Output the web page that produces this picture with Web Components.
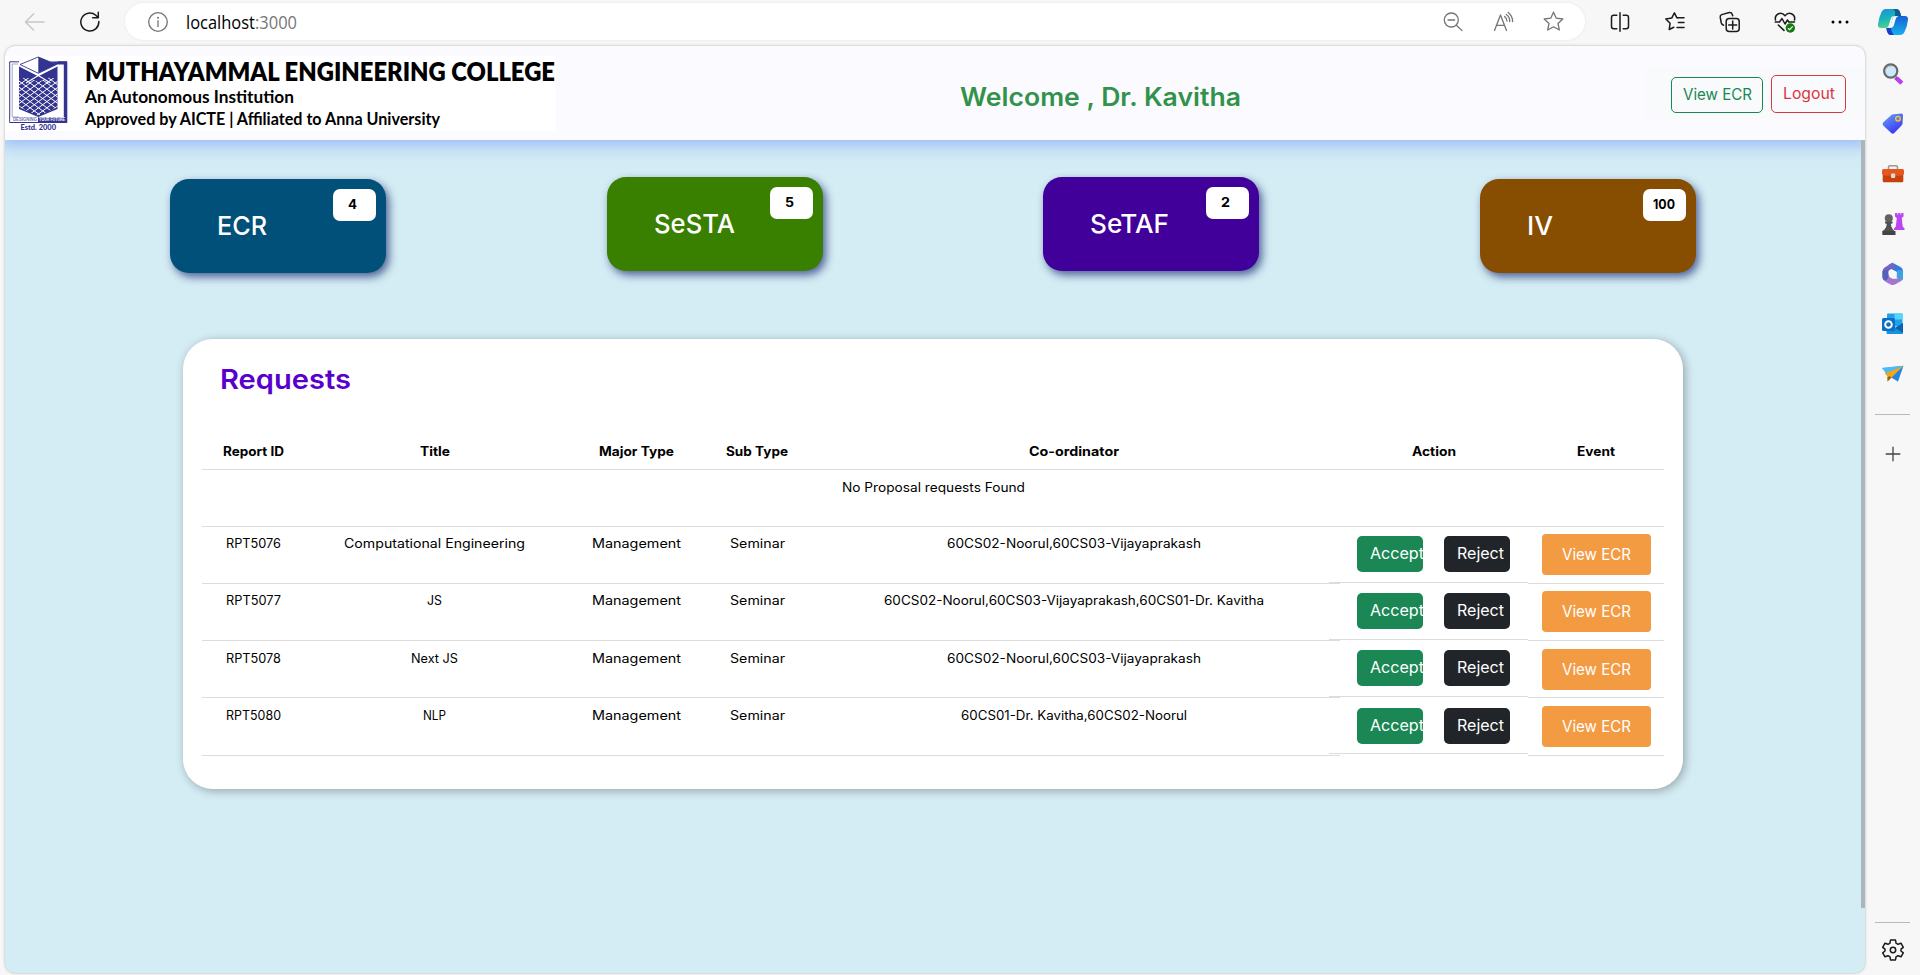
<!DOCTYPE html>
<html lang="en">
<head>
<meta charset="utf-8">
<title>localhost:3000</title>
<style>
html,body{margin:0;height:100%;overflow:hidden}
body{background:#f7f7f7;font-family:Inter,"Open Sans",sans-serif;color:#000}
</style>
</head>
<body>
<app-window></app-window>
<script>
const shadow=(el,html)=>{const r=el.attachShadow({mode:'open'});const t=document.createElement('template');t.innerHTML=html;r.append(t.content.cloneNode(true));return r};

const S='fill="none" stroke="#1b1b1b" stroke-width="1.5" stroke-linecap="round" stroke-linejoin="round"';
const G='fill="none" stroke="#747474" stroke-width="1.3" stroke-linecap="round" stroke-linejoin="round"';
const STAR='M10.500 1.200L13.300 7.200L19.800 8L15 12.500L16.300 19L10.500 15.800L4.700 19L6 12.500L1.200 8L7.700 7.200Z';
const ICONS={
back:[22,22,`<path d="M10 2.500L1.500 11L10 19.500M1.800 11H20.500" fill="none" stroke="#c6c6c6" stroke-width="1.4"/>`],
reload:[22,22,`<path d="M19.800 10.500A9 9 0 1 1 16.800 4.300L19 6.500M19.300 1.200V6.700H13.700" ${S}/>`],
info:[22,22,`<circle cx="11" cy="11" r="9.300" ${G}/><path d="M11 9.700V15.500" ${G}/><circle cx="11" cy="6.800" r="1" fill="#747474"/>`],
zoomout:[22,22,`<circle cx="9.300" cy="9" r="7" ${G}/><path d="M14.400 14.200L20 19.600M6 9H12.600" ${G}/>`],
read:[24,22,`<path d="M2.500 19.500L8.500 4L14.500 19.500M4.800 14.300H12.300" ${G}/><path d="M12.600 5.500Q15 7.500 15 10M14.300 3.500Q18 6 17.700 10.500M16.200 1.500Q20.600 4.800 20.600 10.500" ${G}/>`],
star:[22,22,`<path d="${STAR}" ${G}/>`],
split:[22,22,`<path d="M7.800 4.200H4.700Q2.500 4.200 2.500 6.400V15.500Q2.500 17.700 4.700 17.700H7.800M14.200 4.200H17.300Q19.500 4.200 19.500 6.400V15.500Q19.500 17.700 17.300 17.700H14.200M11 1.800V20.200" ${S}/>`],
favs:[22,22,`<path d="M13.800 6.900L12.800 6.700L10.400 1.800L7.700 7.100L1.800 8L6.100 12.300L5.200 18.500L9.800 16.300M13.200 6.700H20M14.300 11.600H20M13 16.500H20" ${S}/>`],
coll:[22,22,`<path d="M4.600 14.200Q2.800 13.800 2.300 12L1.200 6.200Q.9 4.300 2.700 3.600L10.300 1.500Q12.500 1.200 13.200 3.300L13.700 4.800" ${S}/><rect x="7.200" y="7.500" width="13" height="13" rx="3" ${S}/><path d="M13.700 10V18M9.700 14H17.700" ${S}/>`],
heart:[22,22,`<path d="M1.500 9Q.5 4.500 4.500 2.700Q8.300 1.300 11 4.800Q13.700 1.300 17.500 2.700Q21.500 4.500 20.500 9M1.200 11H5.500L8 7.500L11 13L13.500 9L14.800 11H20.500M4.300 14L10 19.400" ${S}/><circle cx="16.300" cy="17" r="4.700" fill="#107c10"/><path d="M14 17.200L15.700 18.700L18.700 15.400" fill="none" stroke="#fff" stroke-width="1.2"/>`],
dots:[22,22,`<circle cx="4" cy="11" r="1.500"/><circle cx="11" cy="11" r="1.500"/><circle cx="18" cy="11" r="1.500"/>`],
copilot:[32,28,`<defs><linearGradient id="a" x1="0" y1="0" x2=".3" y2="1"><stop offset="0" stop-color="#1a8fdc"/><stop offset=".55" stop-color="#19b5b8"/><stop offset="1" stop-color="#55d08a"/></linearGradient><linearGradient id="b" x1="0" y1="0" x2="0" y2="1"><stop offset="0" stop-color="#1661cf"/><stop offset="1" stop-color="#16b0ee"/></linearGradient></defs><path d="M8.500 1H19Q22 1 23 4L24.200 8H17Q14.500 8 13.800 10.500L11.800 17.500Q10.800 20 8.500 20H4Q.8 20 1 16.500Q1.600 10 4.500 4Q5.800 1 8.500 1Z" fill="url(#a)"/><path d="M16 1H19Q22 1 23 4L24.200 8H17.800Q19 3 16 1Z" fill="#0d5c8f"/><path d="M18.500 8H28Q31.200 8 31 11.500Q30.500 18 27.500 24Q26.200 27 23.500 27H14Q10.500 27 9.300 20Q12.500 20.500 13.500 18L15.600 10.500Q16.300 8 18.500 8Z" fill="url(#b)"/><path d="M9.300 20Q12.500 20.500 13.700 18.500Q14 24 17 27H13Q10.200 26.500 9.300 20Z" fill="#1b3fc4"/><path d="M18.500 8H21.500Q19.500 8.500 18.700 11L16.700 17.700Q15.800 20 13 20H10.500Q12.800 19.500 13.500 17.300L15.600 10.500Q16.300 8 18.500 8Z" fill="#f4fbff"/>`],
search:[24,24,`<path d="M14.500 15.500L20.500 21" stroke="#8d4bd8" stroke-width="3.800"/><path d="M16 16.500L21 21" stroke="#c03bf5" stroke-width="3.800"/><circle cx="9.700" cy="9" r="6.600" fill="#cde8fb" stroke="#686868" stroke-width="2.200"/><path d="M5 6.500A5.500 5.500 0 0 1 11 3.900" fill="none" stroke="#a5a5a5" stroke-width="1"/>`],
tag:[24,24,`<defs><linearGradient id="c" x1="0" y1="0" x2=".6" y2="1"><stop offset="0" stop-color="#67a5fa"/><stop offset="1" stop-color="#3b38f2"/></linearGradient></defs><path d="M12.500 2.200L20.500 1.500Q22 1.700 22 3.300L21.500 11.800Q21.300 12.800 20.500 13.600L13.300 21Q11.700 22.300 10.200 21L2.200 13.500Q.8 12 2.200 10.500L10.300 3Q11.200 2.300 12.500 2.200Z" fill="url(#c)"/><circle cx="17" cy="6.700" r="2.300" fill="#7476d8" stroke="#f5ce2e" stroke-width="1.300"/>`],
briefcase:[24,24,`<path d="M7.500 8V5.200Q7.500 3.800 9 3.800H15Q16.500 3.800 16.500 5.200V8" fill="none" stroke="#9a9a9a" stroke-width="1.600"/><rect x="1.700" y="11" width="20.600" height="9.300" rx="1.500" fill="#c8410d"/><path d="M1 8.500Q1 7 2.500 7H21.500Q23 7 23 8.500V12L20.500 13.800H3.500L1 12Z" fill="#e5571c"/><rect x="10" y="11.500" width="4.200" height="4.500" rx=".8" fill="#d7dce0"/>`],
chess:[24,24,`<path d="M14 1V4.500L15.800 6L14.800 14.500L13 16.500V18H23.500V16.500L21.700 14.500L20.700 6L22.500 4.500V1H20.200V2.800H19.400V1H17.100V2.800H16.300V1Z" fill="#bd44f2"/><circle cx="7.800" cy="6.200" r="4" fill="#626262"/><path d="M4 9.600H11.600V11.200L9.800 12Q10 15.500 12.200 17.800L13.500 19V22.500H1.500V19L3.300 17.800Q5.600 15.500 5.800 12L4 11.200Z" fill="#515151"/><path d="M1.500 19H14.500V23H1.500Z" fill="#444"/>`],
m365:[24,24,`<path d="M11.500 .8L19.500 5Q22 6.400 22 9V13L15.800 15.500V10L9 6.300L7.200 3Z" fill="#3a78db"/><path d="M11.500 .8L4 5.200Q1.500 6.600 1.500 9.500V15Q1.500 17.500 4 18.500L10.200 14.500L7.300 12V8.800L13.500 5Z" fill="#7a62c4"/><path d="M1.700 16Q2.500 18.500 5 19.900L9.500 22.400Q12 23.600 14.500 22.200L20.500 18.700Q22.300 17.200 22 13L15.600 16.800H12L4.600 13.500Z" fill="#a477cf"/><path d="M1.500 9V15.500Q1.500 17.500 3.500 18.600Q7 18.500 7.300 14V8.500L10 6.700Q5 7 1.500 9Z" fill="#5560bb"/><path d="M15.800 8.500V15.500L21.500 18Q22 17 22 14V9.500Q20 6.500 15.800 8.500Z" fill="#3aa4e2"/><path d="M11.500 7.700L15.600 10V14.300L11.500 16.500L7.800 14.300V10Z" fill="#f7f7f7"/>`],
outlook:[24,24,`<rect x="6" y="1.500" width="15.500" height="13" rx="1" fill="#22a1e8"/><rect x="13.500" y="1.500" width="8" height="6" fill="#54d5ff"/><path d="M5.500 12L13.500 16L22 11V21Q22 22 21 22H6.500Q5.500 22 5.500 21Z" fill="#1790df"/><path d="M22 11V21L14 16Z" fill="#0c62ae"/><rect x="1" y="6" width="13" height="13" rx="1.500" fill="#0c6fc4"/><circle cx="7.500" cy="12.500" r="3.300" fill="none" stroke="#fff" stroke-width="1.900"/>`],
plane:[24,24,`<path d="M1 6L22.500 3.800L10 13.500Z" fill="#39a9f3"/><path d="M22.500 3.800L17 19.500L8.500 14.500Z" fill="#2185e3"/><path d="M22.500 3.800L6.500 19.500V14.500L3.500 11Z" fill="#f6a418"/><path d="M6.500 19.500L10.500 15.500L8.500 14.300L6.500 15Z" fill="#94621b"/><path d="M1 6L22.500 3.800L5 11.300Z" fill="#4dbaf5"/>`],
plus:[22,22,`<path d="M11 3.700V18.300M3.700 11H18.300" fill="none" stroke="#444" stroke-width="1.300"/>`],
gear:[24,24,`<path d="M9.500 2H14.500L15 5.200L17 6.300L20 5.200L22.300 9.300L20 11.200V13L22.300 14.900L20 18.800L17 17.700L15 18.900L14.500 22H9.500L9 18.900L7 17.700L4 18.800L1.700 14.900L4 13V11.200L1.700 9.300L4 5.200L7 6.300L9 5.200Z" ${S}/><circle cx="12" cy="12" r="2.700" ${S}/>`]
};
customElements.define('ui-icon',class extends HTMLElement{connectedCallback(){if(this.shadowRoot)return;
 const [w,h,p]=ICONS[this.getAttribute('name')];
 shadow(this,`<style>:host{display:block;flex:none;width:${w}px;height:${h}px}svg{display:block}</style><svg width="${w}" height="${h}" viewBox="0 0 ${w} ${h}">${p}</svg>`)}});

customElements.define('tool-bar',class extends HTMLElement{connectedCallback(){if(this.shadowRoot)return;
 shadow(this,`<style>
:host{display:flex;align-items:center;height:43px;box-sizing:border-box;padding-left:24px}
ui-icon[name=reload]{margin:0 24px 0 33px}
.addr{display:flex;align-items:center;box-sizing:border-box;width:1460px;height:37px;border-radius:19px;background:#fff;box-shadow:0 0 3px rgba(0,0,0,.08);padding:0 20px 0 22px;margin-right:24px}
.url{margin-left:17px;flex:1;font:18px/24px "Open Sans",sans-serif}
.addr ui-icon[name=read]{margin:0 27px 0 28px}
.tools{display:flex;gap:33px}
</style><ui-icon name="back"></ui-icon><ui-icon name="reload"></ui-icon>
<div class="addr"><ui-icon name="info"></ui-icon><div class="url"><fit-text w="111">localhost<span style="color:#767676">:3000</span></fit-text></div><ui-icon name="zoomout"></ui-icon><ui-icon name="read"></ui-icon><ui-icon name="star"></ui-icon></div>
<div class="tools"><ui-icon name="split"></ui-icon><ui-icon name="favs"></ui-icon><ui-icon name="coll"></ui-icon><ui-icon name="heart"></ui-icon><ui-icon name="dots"></ui-icon></div>`)}});

customElements.define('side-bar',class extends HTMLElement{connectedCallback(){if(this.shadowRoot)return;
 shadow(this,`<style>
:host{display:flex;flex-direction:column;align-items:center;width:54px;height:975px;box-sizing:border-box;padding:8px 1px 0 0}
.apps{display:flex;flex-direction:column;gap:26px;margin-top:25.500px}
hr{border:0;width:35px;height:1px;background:#b9b9b9;margin:0}
.apps+hr{margin:28.500px 0 28px}
.end{margin-top:auto;display:flex;flex-direction:column;align-items:center;gap:15px;padding-bottom:13px}
</style><ui-icon name="copilot"></ui-icon><div class="apps">${['search','tag','briefcase','chess','m365','outlook','plane'].map(n=>`<ui-icon name="${n}"></ui-icon>`).join('')}</div><hr><ui-icon name="plus"></ui-icon><div class="end"><hr><ui-icon name="gear"></ui-icon></div>`)}});

const lattice=[];
for(let y=50;y<116;y+=6.2)lattice.push(`M19 ${y}L58 ${y+28.8}M58 ${y}L19 ${y+28.8}`);
customElements.define('college-logo',class extends HTMLElement{connectedCallback(){if(this.shadowRoot)return;
 shadow(this,`<style>:host{display:block;width:70px;height:75px}svg{display:block}</style>
<svg width="70" height="75" viewBox="5 56 70 75"><defs><clipPath id="c"><path d="M19 79L26 77L38.300 82L50 77L57.500 79V107L38.300 116L19 107Z"/></clipPath></defs>
<path d="M19 61.800H9.700V122.500H66.800V61.800H57.500" fill="none" stroke="#32348f" stroke-width="1"/>
<path d="M18 64H12.200V117H19" fill="none" stroke="#8d8fc4" stroke-width=".8"/>
<path d="M50 61.500H67V123H63.800V64.500H55Z" fill="#32348f"/>
<path d="M19 66L38.300 76L57.500 66V109L38.300 117L19 109Z" fill="#32348f"/>
<g clip-path="url(#c)" fill="none" stroke="#fff" stroke-width="1"><path d="${lattice.join('')}"/></g>
<path d="M19 65.500L38.300 75.500L57.500 65.500" fill="none" stroke="#fff" stroke-width="1.500"/>
<path d="M38.300 75.500L26 83M38.300 75.500L50.500 83" fill="none" stroke="#fff" stroke-width="1.100"/>
<path d="M38.300 57L20 64.500L38.300 73.300L56.500 64.500Z" fill="#fff" stroke="#32348f" stroke-width=".9"/><path d="M38.300 57L56.500 64.500L38.300 73.300Z" fill="#32348f"/>
<rect x="10.500" y="117.300" width="27.500" height="4.700" fill="#fff"/><rect x="38" y="117.300" width="28.500" height="5.200" fill="#32348f"/>
<g font-family="Liberation Sans,sans-serif" font-weight="700" font-size="4.600"><text x="13" y="121.400" fill="#6f71b4" textLength="24" lengthAdjust="spacingAndGlyphs">DESIGNING</text><text x="39" y="121.400" fill="#fff" textLength="26" lengthAdjust="spacingAndGlyphs">YOUR FUTURE</text></g>
<text x="20.500" y="129.700" font-family="Lato,sans-serif" font-weight="900" font-size="7.600" fill="#32348f" textLength="35.500" lengthAdjust="spacingAndGlyphs">Estd. 2000</text></svg>`)}});

customElements.define('line-button',class extends HTMLElement{connectedCallback(){if(this.shadowRoot)return;
 shadow(this,`<style>:host{display:flex;align-items:center;justify-content:center;box-sizing:border-box;border:1px solid currentColor;border-radius:5px;font-size:15.500px;line-height:20px;color:var(--c);width:var(--w);height:var(--h);padding-bottom:1px}</style><slot></slot>`)}});

customElements.define('site-header',class extends HTMLElement{connectedCallback(){if(this.shadowRoot)return;
 shadow(this,`<style>
:host{display:flex;align-items:center;height:94px;flex:none;background:#fbfaff;box-shadow:0 0 16px 5px rgba(130,165,250,.75);position:relative;box-sizing:border-box}
.brand{display:flex;width:551px;height:75px;background:#fff}
.t{margin-left:10px;font-family:Lato,sans-serif;font-weight:700;display:flex;flex-direction:column}
.t fit-text:nth-child(1){font-size:26px;line-height:30px;font-weight:800}
.t fit-text:nth-child(2){font-size:16.500px;line-height:22px}
.t fit-text:nth-child(3){font-size:16.500px;line-height:22px}
.w{margin:8px 0 0 404px;font-weight:600;font-size:25px;line-height:30px;color:#31924a}
.b{display:flex;align-items:flex-end;gap:8px;margin-left:auto;width:220px;height:52px;box-sizing:border-box;padding:0 19px 6px 26px;background:#f8fafb}
</style><div class="brand"><college-logo></college-logo><div class="t"><fit-text w="470">MUTHAYAMMAL ENGINEERING COLLEGE</fit-text><fit-text w="209">An Autonomous Institution</fit-text><fit-text w="355">Approved by AICTE | Affiliated to Anna University</fit-text></div></div>
<div class="w"><fit-text w="281">Welcome , Dr. Kavitha</fit-text></div>
<div class="b"><line-button style="--c:#198754;--w:92px;--h:36px"><fit-text w="69">View ECR</fit-text></line-button><line-button style="--c:#dc3545;--w:75px;--h:38px"><fit-text w="52">Logout</fit-text></line-button></div>`)}});

customElements.define('stat-card',class extends HTMLElement{connectedCallback(){if(this.shadowRoot)return;
 shadow(this,`<style>
:host{display:flex;justify-content:space-between;width:216px;height:94px;border-radius:19px;background:var(--bg);box-sizing:border-box;padding:10px 10px 0 47px;box-shadow:3px 4px 8px rgba(20,40,110,.7)}
.n{color:#fff;font-weight:500;font-size:26px;line-height:30px;margin-top:22px}
.b{width:43px;height:32px;border-radius:7px;background:#fff;font-weight:700;font-size:13.500px;line-height:31px;display:flex;justify-content:center;box-sizing:border-box;padding-right:4px}
:host([wide]) .b{padding-right:2px}
</style><div class="n"><slot></slot></div><div class="b"><slot name="count"></slot></div>`)}});

customElements.define('pill-button',class extends HTMLElement{connectedCallback(){if(this.shadowRoot)return;
 shadow(this,`<style>:host{display:flex;align-items:center;flex:none;box-sizing:border-box;border-radius:5px;background:var(--bg);width:66px;height:36px;padding-left:12.500px;color:#fff;font-size:15.500px;line-height:20px}
:host([big]){width:109px;height:41px;padding-left:20px;border-radius:4px}</style><slot></slot>`)}});

customElements.define('request-row',class extends HTMLElement{connectedCallback(){if(this.shadowRoot)return;
 const h=this.getAttribute('h')||57, o=+(this.getAttribute('o')||0);
 shadow(this,`<style>
:host{display:grid;grid-template-columns:102px 261px 142px 100px 533px 188px 136px;height:${h}px;font-size:12.700px;line-height:17px;--line:#dcdcdc}
div{box-sizing:border-box;display:flex;justify-content:center;align-items:flex-start;border-bottom:1px solid var(--line);padding-top:${8+o}px}
.a{height:${h-(h>57?2:1)}px;padding:${h>57?10:9}px 18px 0 17px;gap:21px;margin-left:-11px;justify-content:flex-end}
.e{padding-top:${o?8:7}px}
</style>${['id','title','major','sub','co'].map(n=>`<div><slot name="${n}"></slot></div>`).join('')}
<div class="a"><pill-button style="--bg:#1a8754"><fit-text w="54">Accept</fit-text></pill-button><pill-button style="--bg:#212529"><fit-text w="47">Reject</fit-text></pill-button></div>
<div class="e"><pill-button big style="--bg:#f39b43"><fit-text w="69">View ECR</fit-text></pill-button></div>`)}});

customElements.define('requests-panel',class extends HTMLElement{connectedCallback(){if(this.shadowRoot)return;
 const rows=[['RPT5076',55,'Computational Engineering',181,'60CS02-Noorul,60CS03-Vijayaprakash',254,0,57],['RPT5077',55,'JS',15,'60CS02-Noorul,60CS03-Vijayaprakash,60CS01-Dr. Kavitha',380,0,57],['RPT5078',55,'Next JS',47,'60CS02-Noorul,60CS03-Vijayaprakash',254,.5,57],['RPT5080',55,'NLP',23,'60CS01-Dr. Kavitha,60CS02-Noorul',226,1,58]];
 const head=[['Report ID',61],['Title',30],['Major Type',75],['Sub Type',62],['Co-ordinator',90],['Action',44],['Event',38]];
 const f=(s,t,w)=>`<fit-text slot="${s}" w="${w}">${t}</fit-text>`;
 shadow(this,`<style>
:host{display:block;width:1500px;height:450px;box-sizing:border-box;border-radius:30px;background:#fff;padding:26px 19px 0;box-shadow:2px 2px 10px rgba(0,0,0,.3)}
h2{margin:0 0 0 18px;font-size:27px;line-height:30px;font-weight:600;color:#5a00cc}
.h{display:grid;grid-template-columns:102px 261px 142px 100px 533px 188px 136px;justify-items:center;margin-top:48px;height:26px;font-size:12.700px;line-height:18px;font-weight:700;border-bottom:1px solid #dcdcdc;width:1462px}
.none{width:1462px;height:57px;box-sizing:border-box;border-bottom:1px solid #dcdcdc;display:flex;justify-content:center;padding-top:9px;font-size:12.700px;line-height:17px}
</style><h2><fit-text w="131">Requests</fit-text></h2>
<div class="h">${head.map(([t,w])=>f('',t,w)).join('')}</div>
<div class="none"><fit-text w="183">No Proposal requests Found</fit-text></div>
${rows.map(r=>`<request-row o="${r[6]}" h="${r[7]}">${f('id',r[0],r[1])}${f('title',r[2],r[3])}${f('major','Management',89)}${f('sub','Seminar',55)}${f('co',r[4],r[5])}</request-row>`).join('')}`)}});

customElements.define('app-window',class extends HTMLElement{connectedCallback(){if(this.shadowRoot)return;
 shadow(this,`<style>
:host{display:grid;grid-template-columns:1866px 54px;height:975px}
.page{display:flex;flex-direction:column;margin:3px 0 0 5px;width:1860px;height:927px;border-radius:10px;overflow:hidden;background:#d4ecf4;box-shadow:0 0 3px rgba(0,0,0,.28)}
.body{display:flex;justify-content:space-between}
.scroll{width:4px;height:768px;background:#abb6ba;position:relative;z-index:2}
.cards{display:flex;gap:220.700px;align-items:flex-start;padding:37px 0 0 165px}
.up{margin-top:0}.dn{margin-top:2px}
requests-panel{margin:66px 0 0 178px}
</style><main><tool-bar></tool-bar><div class="page"><site-header></site-header><div class="body"><div>
<div class="cards"><stat-card class="dn" style="--bg:#00507a"><fit-text w="50">ECR</fit-text><fit-text slot="count" w="9">4</fit-text></stat-card>
<stat-card class="up" style="--bg:#3a8000"><fit-text w="81">SeSTA</fit-text><fit-text slot="count" w="9">5</fit-text></stat-card>
<stat-card class="up" style="--bg:#400099"><fit-text w="79">SeTAF</fit-text><fit-text slot="count" w="9">2</fit-text></stat-card>
<stat-card wide class="dn" style="--bg:#874d00"><fit-text w="26">IV</fit-text><fit-text slot="count" w="22">100</fit-text></stat-card></div>
<requests-panel></requests-panel></div><div class="scroll"></div></div></div></main><side-bar></side-bar>`)}});

/* Text scaled horizontally to the width given in "w". */
customElements.define('fit-text',class extends HTMLElement{connectedCallback(){if(this.shadowRoot)return;
 const w=+this.getAttribute('w');
 const r=shadow(this,`<style>:host{display:block;width:${w}px;white-space:nowrap}span{display:inline-block;vertical-align:top;transform-origin:0 50%}</style><span><slot></slot></span>`);
 const s=r.querySelector('span');const n=s.getBoundingClientRect().width;
 if(n)s.style.transform=`scaleX(${w/n})`}});
</script>
</body>
</html>
